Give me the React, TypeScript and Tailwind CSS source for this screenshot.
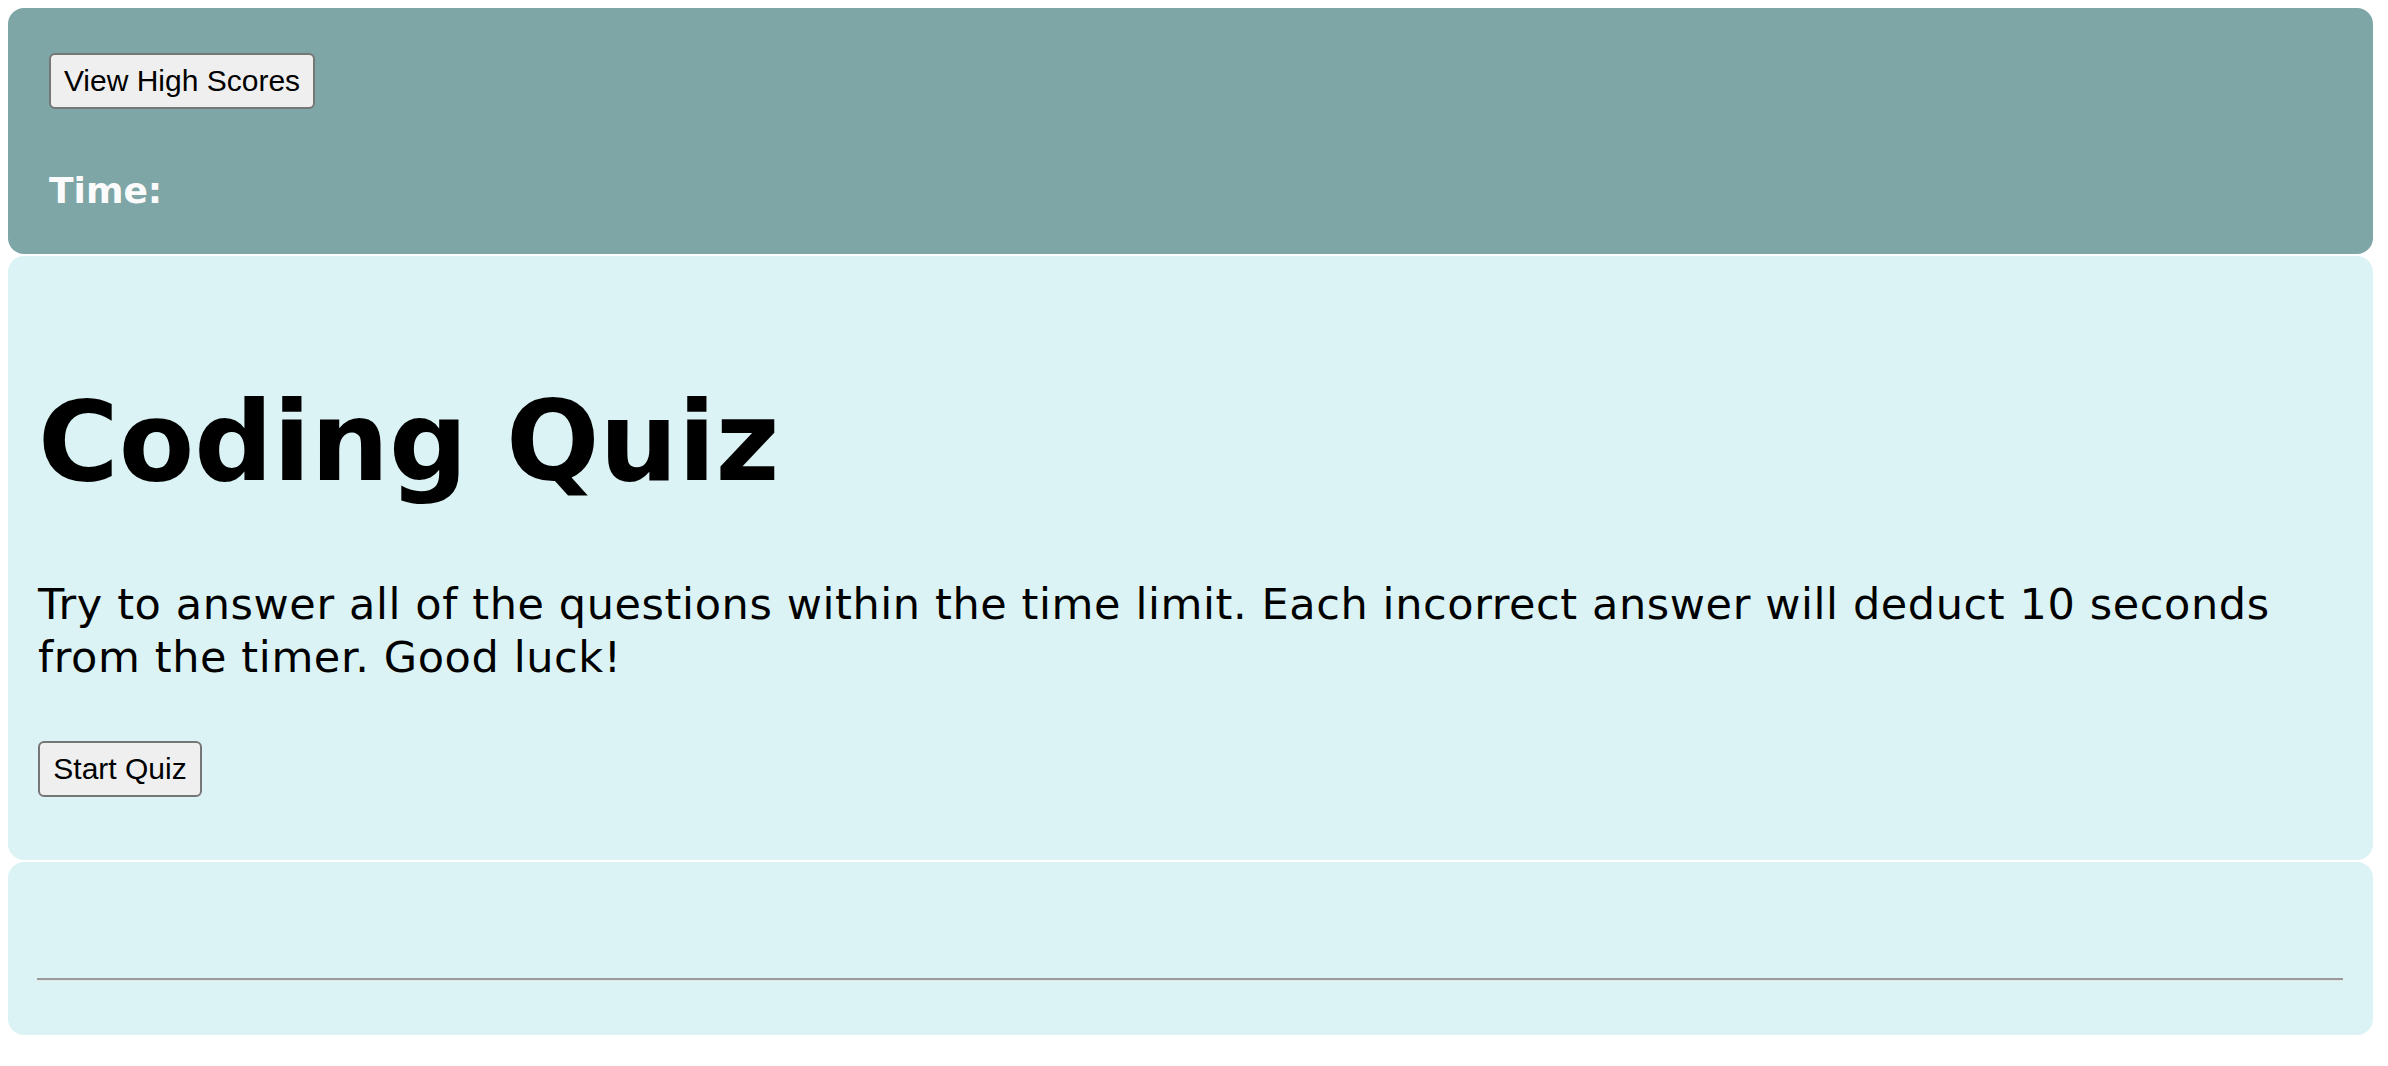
import React from 'react';

const verdana = "font-['DejaVu_Sans',Verdana,sans-serif]";
const btn =
    "h-[56px] rounded-[6px] border-2 border-[#767676] bg-[#efefef] text-[30px] leading-none text-black font-['Liberation_Sans',Arial,sans-serif] flex items-center justify-center";

function Header() {
    return (
        <header className="rounded-[16px] bg-[#7ea6a6] pl-[41px] pt-[45px] pb-[41px]">
            <button type="button" className={`${btn} w-[266px]`}>
                View High Scores
            </button>
            <h3 className={`${verdana} mt-[60px] text-[36px] leading-[44px] font-bold text-[#fbfbfb]`}>
                Time:
            </h3>
        </header>
    );
}

function Intro() {
    return (
        <section className="rounded-[16px] bg-[#dbf3f4] pl-[30px] pr-[60px] pt-[120px] pb-[63px]">
            <h1 className={`${verdana} text-[110px] leading-[132px] font-bold text-black`}>
                Coding Quiz
            </h1>
            <p className={`${verdana} mt-[70px] text-[43px] leading-[53px] tracking-[0.6px] text-black`}>
                Try to answer all of the questions within the time limit. Each incorrect answer will deduct 10 seconds
                from the timer. Good luck!
            </p>
            <button type="button" className={`${btn} mt-[57px] w-[164px]`}>
                Start Quiz
            </button>
        </section>
    );
}

function Results() {
    // empty results area, only the divider shows
    return (
        <section className="rounded-[16px] bg-[#dbf3f4] pl-[29px] pr-[30px] pt-[116px] h-[173px]">
            <hr className="border-t-2 border-t-[#9a9a9a] border-b border-b-[#e6e6e6]" />
        </section>
    );
}

export default function App() {
    return (
        <div className="min-h-screen bg-white pt-[8px] pl-[8px] pr-[15px]">
            <div className="flex flex-col gap-[2px]">
                <Header />
                <Intro />
                <Results />
            </div>
        </div>
    );
}
